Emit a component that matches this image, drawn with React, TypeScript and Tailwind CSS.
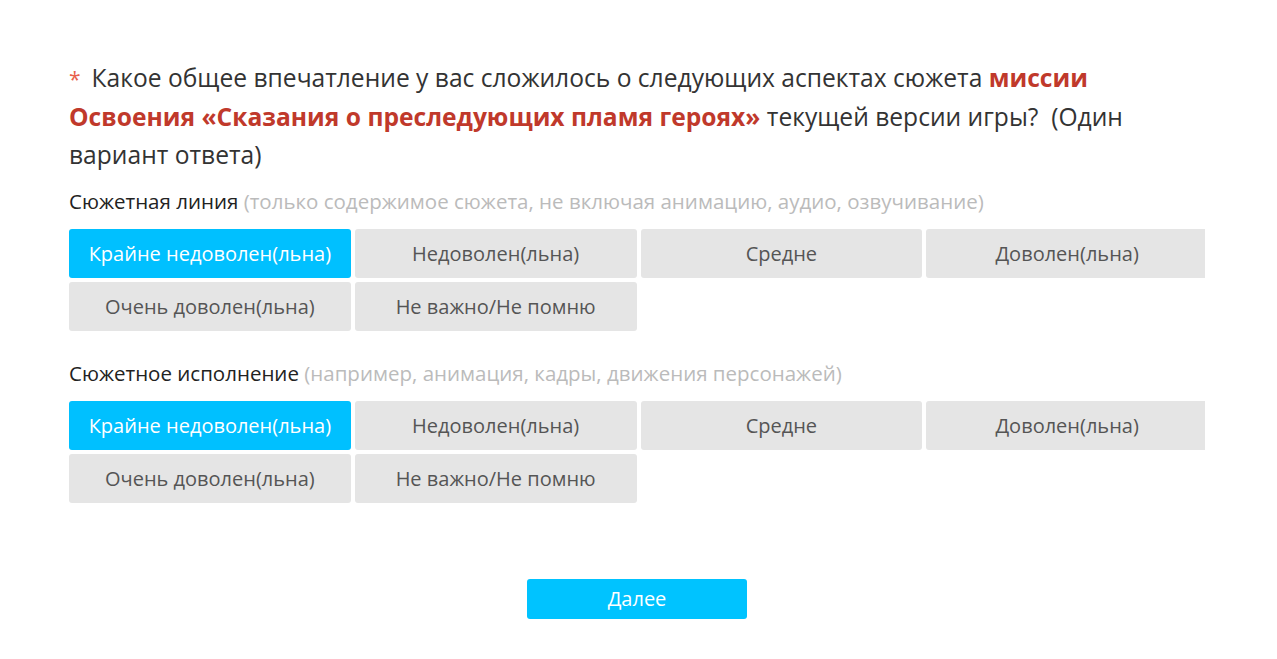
import { useState } from "react";

const OPTIONS = [
  "Крайне недоволен(льна)",
  "Недоволен(льна)",
  "Средне",
  "Доволен(льна)",
  "Очень доволен(льна)",
  "Не важно/Не помню",
];

const QUESTIONS = [
  {
    title: "Сюжетная линия",
    hint: "(только содержимое сюжета, не включая анимацию, аудио, озвучивание)",
  },
  {
    title: "Сюжетное исполнение",
    hint: "(например, анимация, кадры, движения персонажей)",
  },
];

function OptionGroup({ title, hint }: { title: string; hint: string }) {
  const [selected, setSelected] = useState(0);

  return (
    <div>
      <p className="text-[20.5px] leading-[24px] text-[#222]">
        {title} <span className="text-[#bbbbbb]">{hint}</span>
      </p>
      <div className="mt-[16px] w-[1136px] overflow-hidden">
        <div className="grid w-[1139px] grid-cols-4 gap-[4px]">
          {OPTIONS.map((opt, i) => (
            <button
              key={opt}
              onClick={() => setSelected(i)}
              className={`h-[49px] rounded-[3px] text-[20px] ${
                selected === i
                  ? "bg-[#00c0ff] text-white"
                  : "bg-[#e5e5e5] text-[#555]"
              }`}
            >
              {opt}
            </button>
          ))}
        </div>
      </div>
    </div>
  );
}

export default function App() {
  return (
    <div
      className="min-h-screen bg-white"
      style={{ fontFamily: '"Open Sans", "Noto Sans", sans-serif' }}
    >
      <div className="ml-[69px] w-[1136px] pt-[59px]">
        <h1 className="text-[24.6px] leading-[38px] text-[#333]">
          <span className="text-[21px] text-[#e8604c]">*</span>
          <span className="ml-[11px]">
            Какое общее впечатление у вас сложилось о следующих аспектах сюжета{" "}
          </span>
          <b className="text-[#c0392b]">
            миссии Освоения «Сказания о преследующих пламя героях»
          </b>{" "}
          текущей версии игры?&nbsp; (Один вариант ответа)
        </h1>

        <div className="mt-[15px] flex flex-col gap-[30px]">
          {QUESTIONS.map((q) => (
            <OptionGroup key={q.title} title={q.title} hint={q.hint} />
          ))}
        </div>

        <div className="mt-[76px] flex justify-center">
          <button className="h-[40px] w-[220px] rounded-[3px] bg-[#00c3ff] text-[20px] text-white">
            Далее
          </button>
        </div>
      </div>
    </div>
  );
}
